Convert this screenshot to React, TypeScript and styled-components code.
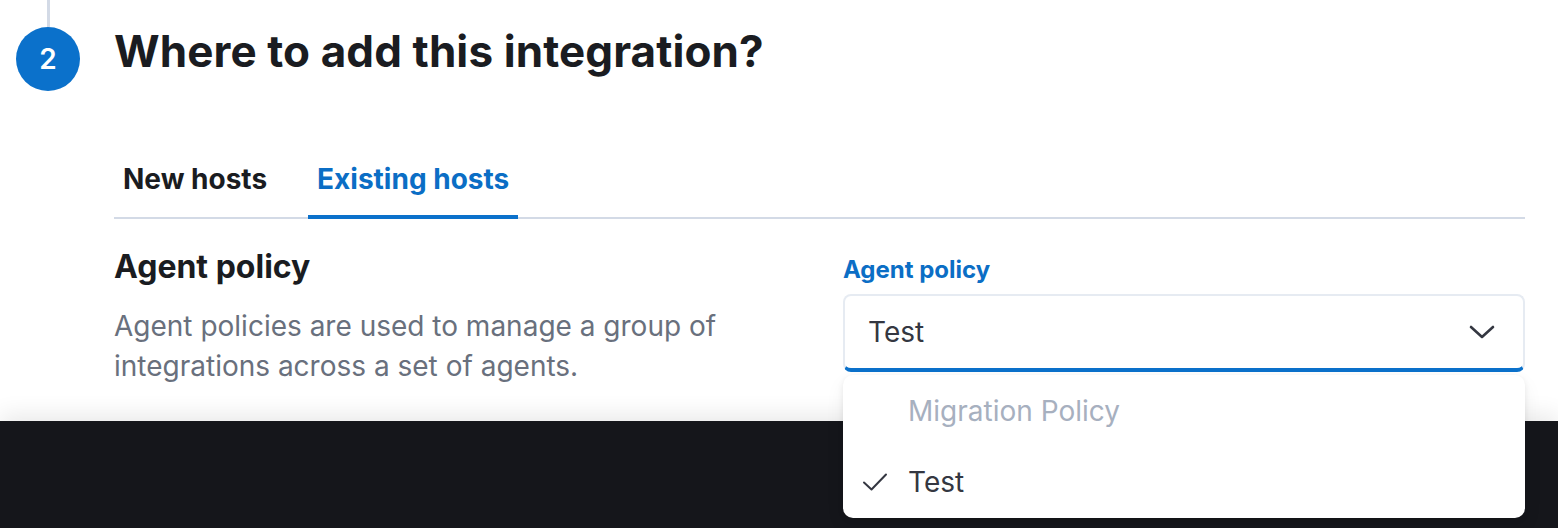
import styled, { createGlobalStyle } from "styled-components";

const GlobalStyle = createGlobalStyle`
    * {
        box-sizing: border-box;
    }
    html, body {
        margin: 0;
        padding: 0;
        background: #ffffff;
        font-family: Inter, "Noto Sans", "Liberation Sans", sans-serif;
        color: #1a1c21;
        overflow: hidden;
    }
`;

const Page = styled.div`
    display: flex;
    flex-direction: column;
    width: 1558px;
    height: 528px;
`;

const Content = styled.main`
    position: relative;
    z-index: 2;
    height: 421px;
    flex-shrink: 0;
    padding-right: 33px;
`;

const Step = styled.section`
    display: grid;
    grid-template-columns: 96px 1fr;
    column-gap: 18px;
`;

const Rail = styled.div`
    display: flex;
    flex-direction: column;
    align-items: center;
`;

const RailLine = styled.div`
    width: 3px;
    height: 27px;
    background: #d3dae6;
`;

const StepNumber = styled.div`
    width: 64px;
    height: 64px;
    border-radius: 50%;
    background: #0b71cb;
    color: #ffffff;
    font-size: 28px;
    font-weight: 600;
    display: flex;
    align-items: center;
    justify-content: center;
`;

const StepBody = styled.div`
    display: flex;
    flex-direction: column;
`;

const StepTitle = styled.h2`
    margin: 23px 0 0;
    font-size: 44px;
    line-height: 56px;
    font-weight: 700;
    letter-spacing: 0.1px;
    color: #1a1c21;
`;

const Tabs = styled.div`
    display: flex;
    gap: 32px;
    margin-top: 62px;
    border-bottom: 2px solid #d3dae6;
`;

const Tab = styled.button<{ $selected?: boolean }>`
    height: 78px;
    margin-bottom: -2px;
    padding: 2px 9px 0;
    border: none;
    background: none;
    font-family: inherit;
    font-size: 28px;
    font-weight: 700;
    color: ${({ $selected }) => ($selected ? "#0b6ec5" : "#1a1c21")};
    border-bottom: 4px solid ${({ $selected }) => ($selected ? "#0b71cb" : "transparent")};
    cursor: pointer;
`;

const FormRow = styled.div`
    display: grid;
    grid-template-columns: 1fr 682px;
    column-gap: 48px;
`;

const Described = styled.div`
    padding-top: 28px;
`;

const SectionTitle = styled.h3`
    margin: 0;
    font-size: 32px;
    line-height: 40px;
    font-weight: 700;
    color: #1a1c21;
`;

const Description = styled.p`
    margin: 19px 0 0;
    font-size: 28px;
    line-height: 40px;
    color: #69707d;
`;

const Field = styled.div`
    padding-top: 35px;
`;

const Label = styled.label`
    display: block;
    font-size: 24px;
    line-height: 32px;
    font-weight: 700;
    color: #0b6ec5;
    margin-bottom: 8px;
`;

const SelectWrap = styled.div`
    position: relative;
`;

const SelectBox = styled.div`
    height: 78px;
    display: flex;
    align-items: center;
    justify-content: space-between;
    padding: 0 28px 0 23px;
    background: #ffffff;
    border: 2px solid #e6ebf2;
    border-bottom: 4px solid #0b71cb;
    border-radius: 8px;
    font-size: 28px;
    color: #343741;
`;

const Menu = styled.ul`
    position: absolute;
    top: 81px;
    left: 0;
    right: 0;
    margin: 0;
    padding: 0;
    list-style: none;
    background: #ffffff;
    border-radius: 10px;
    box-shadow: 0 2px 6px rgba(0, 0, 0, 0.08), 0 8px 20px rgba(0, 0, 0, 0.06);
    z-index: 10;
`;

const Option = styled.li<{ $disabled?: boolean }>`
    height: 71.5px;
    display: flex;
    align-items: center;
    gap: 20px;
    padding-left: 19px;
    font-size: 28px;
    color: ${({ $disabled }) => ($disabled ? "#a7b0bf" : "#343741")};
`;

const CheckSlot = styled.span`
    width: 26px;
    height: 26px;
    display: flex;
    align-items: center;
    justify-content: center;
`;

const Footer = styled.footer`
    flex: 1;
    background: #15161b;
    box-shadow: 0 -6px 22px rgba(0, 0, 0, 0.09);
    position: relative;
    z-index: 1;
`;

const Chevron = () => (
    <svg width="26" height="16" viewBox="0 0 26 16" fill="none">
        <path d="M2 3l11 10 11-10" stroke="#343741" strokeWidth="2.6" strokeLinecap="round" strokeLinejoin="round" />
    </svg>
);

const Check = () => (
    <svg width="26" height="20" viewBox="0 0 26 20" fill="none">
        <path d="M2 10.5l7.5 7L24 2.5" stroke="#343741" strokeWidth="2" strokeLinecap="round" strokeLinejoin="round" />
    </svg>
);

const policies = [
    { name: "Migration Policy", disabled: true, selected: false },
    { name: "Test", disabled: false, selected: true },
];

const App = () => {
    return (
        <>
            <GlobalStyle />
            <Page>
                <Content>
                    <Step>
                        <Rail>
                            <RailLine />
                            <StepNumber>2</StepNumber>
                        </Rail>
                        <StepBody>
                            <StepTitle>Where to add this integration?</StepTitle>
                            <Tabs>
                                <Tab>New hosts</Tab>
                                <Tab $selected>Existing hosts</Tab>
                            </Tabs>
                            <FormRow>
                                <Described>
                                    <SectionTitle>Agent policy</SectionTitle>
                                    <Description>
                                        Agent policies are used to manage a group of integrations across a set of agents.
                                    </Description>
                                </Described>
                                <Field>
                                    <Label>Agent policy</Label>
                                    <SelectWrap>
                                        <SelectBox>
                                            <span>Test</span>
                                            <Chevron />
                                        </SelectBox>
                                        <Menu>
                                            {policies.map((p) => (
                                                <Option key={p.name} $disabled={p.disabled}>
                                                    <CheckSlot>{p.selected && <Check />}</CheckSlot>
                                                    {p.name}
                                                </Option>
                                            ))}
                                        </Menu>
                                    </SelectWrap>
                                </Field>
                            </FormRow>
                        </StepBody>
                    </Step>
                </Content>
                <Footer />
            </Page>
        </>
    );
};

export default App;
